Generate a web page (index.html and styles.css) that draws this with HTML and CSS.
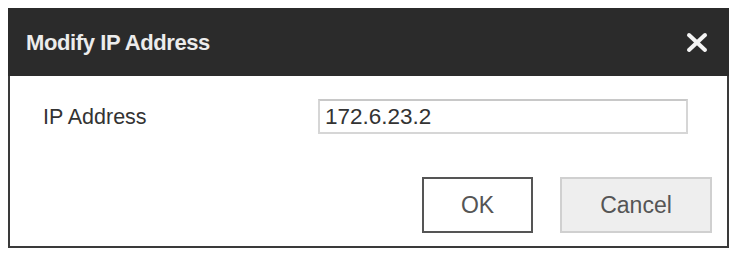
FILE: index.html
```html
<!DOCTYPE html>
<html>
<head>
<meta charset="utf-8">
<link rel="stylesheet" href="styles.css">
</head>
<body>
<div class="dialog">
  <div class="header">
    <span class="title">Modify IP Address</span>
    <svg class="close" width="22" height="21" viewBox="0 0 22 21">
      <line x1="3" y1="3" x2="19" y2="18" stroke="#f4f4f4" stroke-width="4" stroke-linecap="round"/>
      <line x1="19" y1="3" x2="3" y2="18" stroke="#f4f4f4" stroke-width="4" stroke-linecap="round"/>
    </svg>
  </div>
  <div class="body">
    <div class="field">
      <span class="label">IP Address</span>
      <div class="input">172.6.23.2</div>
    </div>
    <div class="actions">
      <div class="btn btn-ok">OK</div>
      <div class="btn btn-cancel">Cancel</div>
    </div>
  </div>
</div>
</body>
</html>
```
FILE: styles.css
```css
html, body {
  margin: 0;
  padding: 0;
  background: #ffffff;
}
body {
  font-family: "Liberation Sans", Arial, sans-serif;
  padding: 8px 0 0 8px;
}
.dialog {
  width: 717px;
  height: 238px;
  border: 2px solid #3a3a3a;
  border-top: none;
  padding-top: 0;
  background: #fff;
  display: flex;
  flex-direction: column;
}
.header {
  height: 68px;
  margin: 0 -2px 0 -2px;
  background: #2b2b2b;
  display: flex;
  align-items: center;
  justify-content: space-between;
  padding: 0 21px 0 18px;
  flex-shrink: 0;
}
.title {
  color: #ececec;
  font-weight: bold;
  font-size: 22px;
  letter-spacing: -0.4px;
  padding-top: 1px;
}
.close {
  display: block;
}
.body {
  flex: 1;
  display: flex;
  flex-direction: column;
  padding: 23px 15px 15px 33px;
}
.field {
  display: grid;
  grid-template-columns: 275px 370px;
  align-items: center;
}
.label {
  font-size: 21.5px;
  color: #333;
  padding-top: 2px;
}
.input {
  box-sizing: border-box;
  height: 35px;
  border: 2px solid #d6d6d6;
  border-top-color: #c8c8c8;
  font-size: 22.5px;
  color: #333;
  padding: 0 0 0 5px;
  display: flex;
  align-items: center;
}
.actions {
  margin-top: 43px;
  display: flex;
  justify-content: flex-end;
  gap: 27px;
}
.btn {
  box-sizing: border-box;
  height: 56px;
  display: flex;
  align-items: center;
  justify-content: center;
  font-size: 23px;
  color: #555;
}
.btn-ok {
  width: 111px;
  border: 2px solid #555;
  background: #fff;
}
.btn-cancel {
  width: 152px;
  border: 2px solid #d0d0d0;
  background: #eeeeee;
}
```
